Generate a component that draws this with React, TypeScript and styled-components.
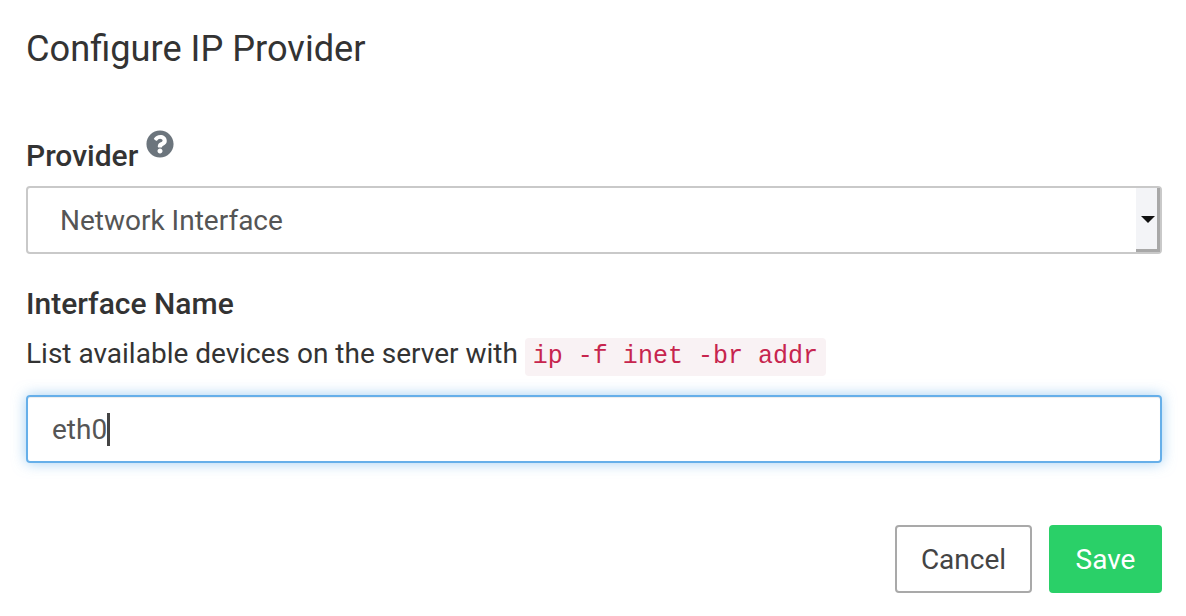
import { FC } from "react";
import styled, { createGlobalStyle } from "styled-components";

const GlobalStyle = createGlobalStyle`
  html, body {
    margin: 0;
    padding: 0;
    background: #fff;
    color: #333;
    font-family: Roboto, "Liberation Sans", sans-serif;
  }
`;

const Modal = styled.div`
  width: 1186px;
  height: 616px;
  box-sizing: border-box;
  padding: 26px 24px 0 26px;
  overflow: hidden;
`;

const Title = styled.h4`
  margin: 0 0 65px;
  font-size: 36.2px;
  line-height: 46px;
  font-weight: 400;
  color: #333;
`;

const Label = styled.div<{ spaced?: boolean }>`
  display: flex;
  align-items: flex-start;
  gap: 8px;
  height: 40px;
  margin-top: ${({ spaced }) => (spaced ? "31px" : "0")};
  font-size: 30px;
  line-height: 38px;
  font-weight: 500;
  color: #333;
`;

const HelpIcon = styled.svg`
  width: 28px;
  height: 28px;
  margin-top: -7px;
  fill: #6c757d;
`;

const Select = styled.div`
  display: flex;
  align-items: stretch;
  height: 68px;
  margin-top: 9px;
  box-sizing: border-box;
  border: 2px solid #c9c9c9;
  border-radius: 4px;
  background: #fff;
`;

const SelectValue = styled.div`
  flex: 1;
  padding: 1px 0 0 32px;
  font-size: 28px;
  line-height: 63px;
  color: #555;
`;

const SelectButton = styled.div`
  position: relative;
  width: 21px;
  background: #f3f4f7;
  border-style: solid;
  border-width: 0 3px 3px 0;
  border-color: #f3f4f7 #a8a8a8 #a8a8a8 #fff;
`;

const Arrow = styled.span`
  position: absolute;
  left: 5px;
  top: 28px;
  border-style: solid;
  border-width: 7px 7px 0;
  border-color: #111 transparent transparent;
`;

const HelpText = styled.div`
  display: flex;
  align-items: baseline;
  height: 42px;
  margin-top: 10px;
  font-size: 28px;
  line-height: 38px;
  color: #333;
`;

const Code = styled.code`
  margin-left: 7px;
  padding: 0 8px;
  font-family: "Liberation Mono", monospace;
  font-size: 25px;
  line-height: 38px;
  color: #c7254e;
  background: #f9f2f4;
  border-radius: 4px;
`;

const Input = styled.div`
  display: flex;
  align-items: center;
  height: 68px;
  margin-top: 18px;
  padding-left: 24px;
  box-sizing: border-box;
  border: 2px solid #66afe9;
  border-radius: 4px;
  font-size: 28px;
  color: #555;
  box-shadow: inset 0 1px 1px rgba(0, 0, 0, 0.075), 0 0 14px rgba(102, 175, 233, 0.6);
`;

const Caret = styled.span`
  display: inline-block;
  width: 3px;
  height: 33px;
  background: #444;
`;

const Footer = styled.div`
  display: flex;
  justify-content: flex-end;
  gap: 17px;
  margin-top: 62px;
`;

const Button = styled.div<{ primary?: boolean }>`
  display: flex;
  align-items: center;
  justify-content: center;
  height: 68px;
  box-sizing: border-box;
  border-radius: 4px;
  font-size: 28px;
  width: ${({ primary }) => (primary ? "113px" : "137px")};
  color: ${({ primary }) => (primary ? "#fff" : "#444")};
  background: ${({ primary }) => (primary ? "#2ad068" : "#fff")};
  border: 2px solid ${({ primary }) => (primary ? "#2ad068" : "#a9a9a9")};
`;

const App: FC = () => {
  return (
    <Modal>
      <GlobalStyle />
      <Title>Configure IP Provider</Title>
      <Label>
        Provider
        <HelpIcon viewBox="0 0 512 512">
          <path d="M504 256c0 137-111 248-248 248S8 393 8 256C8 119 119 8 256 8s248 111 248 248zM262.700 90c-54.500 0-89.300 23-116.500 63.800-3.500 5.300-2.400 12.400 2.700 16.300l34.700 26.300c5.200 3.900 12.600 3 16.700-2.100 17.900-22.700 30.100-35.800 57.300-35.800 20.400 0 45.700 13.100 45.700 33 0 15-12.400 22.700-32.600 34-23.600 13.200-54.800 29.700-54.800 70.900V308c0 6.600 5.400 12 12 12h56c6.600 0 12-5.400 12-12v-1.300c0-28.600 83.500-29.800 83.500-107.100C379.400 123.400 320.200 90 262.700 90zM256 338c-25.400 0-46 20.600-46 46 0 25.400 20.600 46 46 46s46-20.600 46-46c0-25.400-20.600-46-46-46z" />
        </HelpIcon>
      </Label>
      <Select>
        <SelectValue>Network Interface</SelectValue>
        <SelectButton>
          <Arrow />
        </SelectButton>
      </Select>
      <Label spaced>Interface Name</Label>
      <HelpText>
        List available devices on the server with
        <Code>ip -f inet -br addr</Code>
      </HelpText>
      <Input>
        eth0
        <Caret />
      </Input>
      <Footer>
        <Button>Cancel</Button>
        <Button primary>Save</Button>
      </Footer>
    </Modal>
  );
};

export default App;
